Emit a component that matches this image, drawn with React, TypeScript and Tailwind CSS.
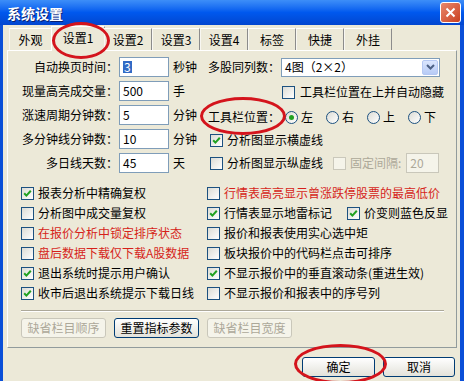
import React from "react";

function Check({ checked, disabled }: { checked?: boolean; disabled?: boolean }) {
  return (
    <span
      className={`w-[13px] h-[13px] shrink-0 border flex items-center justify-center ${
        disabled
          ? "border-[#cac8bb] bg-[#f5f4ea]"
          : "border-[#1c5180] bg-linear-to-br from-[#dcdcd5] to-white"
      }`}
    >
      {checked && (
        <svg width="9" height="9" viewBox="0 0 9 9">
          <path d="M1.2 4.2 L3.4 6.6 L7.8 1.8" stroke="#21a121" strokeWidth="2" fill="none" />
        </svg>
      )}
    </span>
  );
}

function Radio({ on }: { on?: boolean }) {
  return (
    <span className="w-[13px] h-[13px] shrink-0 rounded-full border border-[#1c5180] bg-linear-to-br from-[#dcdcd5] to-white flex items-center justify-center">
      {on && <span className="w-[5px] h-[5px] rounded-full bg-[#21a121]" />}
    </span>
  );
}

function Field({ children, w = "w-[50px]", disabled }: { children: React.ReactNode; w?: string; disabled?: boolean }) {
  return (
    <div
      className={`${w} h-[20px] border flex items-center px-[3px] shrink-0 ${
        disabled ? "border-[#c9c7ba] bg-[#f5f4ea] text-[#aca899]" : "border-[#7f9db9] bg-white"
      }`}
    >
      {children}
    </div>
  );
}

function CheckRow({ label, checked, red }: { label: string; checked?: boolean; red?: boolean }) {
  return (
    <div className="flex items-center h-[20px] gap-[4px]">
      <Check checked={checked} />
      <span className={red ? "text-[#d61f1a]" : ""}>{label}</span>
    </div>
  );
}

function XpButton({ label, disabled, w = "w-[85px]" }: { label: string; disabled?: boolean; w?: string }) {
  return (
    <button
      className={`${w} h-[20px] rounded-[3px] border flex items-center justify-center ${
        disabled
          ? "border-[#c9c7ba] bg-[#f5f4ea] text-[#aca899]"
          : "border-[#003c74] bg-linear-to-b from-white to-[#e3e2da] text-black"
      }`}
    >
      {label}
    </button>
  );
}

const tabs = ["外观", "设置1", "设置2", "设置3", "设置4", "标签", "快捷", "外挂"];

export default function App() {
  return (
    <div
      className="relative w-[464px] h-[381px] overflow-hidden flex flex-col bg-[#0a4fd8] text-[12px] leading-none text-black"
      style={{ fontFamily: '"Noto Sans CJK SC", "Noto Sans", sans-serif' }}
    >
      {/* title bar */}
      <div className="h-[25px] shrink-0 flex items-center justify-between pl-[7px] pr-[3px] bg-linear-to-b from-[#3d8ef8] via-[#0058ee] to-[#0246cf]">
        <span className="text-white font-bold text-[14px] [text-shadow:1px_1px_#0a1f6e]">系统设置</span>
        <div className="w-[21px] h-[21px] rounded-[3px] border border-white bg-linear-to-br from-[#e9876b] to-[#c93e1d] flex items-center justify-center">
          <svg width="11" height="11" viewBox="0 0 11 11">
            <path d="M1.5 1.5 L9.5 9.5 M9.5 1.5 L1.5 9.5" stroke="white" strokeWidth="2" />
          </svg>
        </div>
      </div>

      {/* body */}
      <div className="flex-1 ml-[3px] mr-[4px] bg-[#ece9d8] px-[4px] flex flex-col">
        {/* tabs */}
        <div className="h-[25px] flex items-end pl-[2px] relative z-10">
          {tabs.map((t, i) =>
            i === 1 ? (
              <div
                key={t}
                className="w-[54px] h-[25px] -mb-px -mx-[1px] bg-[#ece9d8] border-t border-l border-white border-r border-r-[#919b9c] flex items-center justify-center pb-[2px]"
              >
                {t}
              </div>
            ) : (
              <div
                key={t}
                className={`${i === 0 ? "w-[43px]" : "w-[48px]"} h-[22px] border-t border-l border-t-white border-l-[#f8f7f2] border-r border-r-[#8c8c8c] flex items-center justify-center bg-[#ece9d8]`}
              >
                {t}
              </div>
            )
          )}
        </div>

        {/* panel */}
        <div className="w-[450px] h-[298px] border border-t-white border-l-white border-r-[#919b9c] border-b-[#919b9c] pt-[6px] flex flex-col">
          <div className="flex flex-col gap-[4px]">
            <div className="flex items-center h-[20px]">
              <span className="w-[110px] text-right">自动换页时间：</span>
              <div className="ml-[1px]">
                <Field>
                  <span className="bg-[#316ac5] text-white px-px">3</span>
                </Field>
              </div>
              <span className="ml-[4px] w-[35px]">秒钟</span>
              <span className="w-[72px]">多股同列数：</span>
              <div className="ml-[1px] w-[159px] h-[19px] border border-[#7f9db9] bg-white flex items-center justify-between pl-[3px] pr-px">
                <span>4图（2×2）</span>
                <span className="w-[16px] h-[15px] rounded-[2px] border border-[#b5c8f3] bg-linear-to-b from-[#dbe6fd] to-[#b7cbf6] flex items-center justify-center">
                  <svg width="9" height="6" viewBox="0 0 9 6">
                    <path d="M1 1 L4.5 4.5 L8 1" stroke="#4d6185" strokeWidth="2" fill="none" />
                  </svg>
                </span>
              </div>
            </div>

            <div className="flex items-center h-[20px]">
              <span className="w-[110px] text-right">现量高亮成交量：</span>
              <div className="ml-[1px]">
                <Field>500</Field>
              </div>
              <span className="ml-[4px] w-[35px]">手</span>
              <div className="ml-[74px] flex items-center gap-[5px] mt-[2px]">
                <Check />
                <span>工具栏位置在上并自动隐藏</span>
              </div>
            </div>

            <div className="flex items-center h-[20px]">
              <span className="w-[110px] text-right">涨速周期分钟数：</span>
              <div className="ml-[1px]">
                <Field>5</Field>
              </div>
              <span className="ml-[4px] w-[35px]">分钟</span>
              <span className="w-[72px] mt-[4px]">工具栏位置：</span>
              <div className="ml-[5px] flex items-center mt-[4px]">
                {["左", "右", "上", "下"].map((r, i) => (
                  <div key={r} className="w-[41px] flex items-center gap-[3px]">
                    <Radio on={i === 0} />
                    <span>{r}</span>
                  </div>
                ))}
              </div>
            </div>

            <div className="flex items-center h-[20px]">
              <span className="w-[110px] text-right">多分钟线分钟数：</span>
              <div className="ml-[1px]">
                <Field>10</Field>
              </div>
              <span className="ml-[4px] w-[35px]">分钟</span>
              <div className="ml-[2px] flex items-center gap-[4px] mt-[2px]">
                <Check checked />
                <span>分析图显示横虚线</span>
              </div>
            </div>

            <div className="flex items-center h-[20px]">
              <span className="w-[110px] text-right">多日线天数：</span>
              <div className="ml-[1px]">
                <Field>45</Field>
              </div>
              <span className="ml-[4px] w-[35px]">天</span>
              <div className="ml-[2px] flex items-center gap-[4px]">
                <Check />
                <span>分析图显示纵虚线</span>
              </div>
              <div className="ml-[10px] flex items-center gap-[4px]">
                <Check disabled />
                <span className="text-[#aca899]">固定间隔:</span>
              </div>
              <div className="ml-[5px]">
                <Field w="w-[33px]" disabled>
                  20
                </Field>
              </div>
            </div>
          </div>

          {/* check list */}
          <div className="mt-[10px] pl-[13px] grid grid-cols-[186px_1fr]">
            <CheckRow label="报表分析中精确复权" checked />
            <CheckRow label="行情表高亮显示曾涨跌停股票的最高低价" red />
            <CheckRow label="分析图中成交量复权" />
            <div className="flex items-center h-[20px]">
              <Check checked />
              <span className="ml-[4px]">行情表显示地雷标记</span>
              <span className="ml-[15px]">
                <Check checked />
              </span>
              <span className="ml-[4px]">价变则蓝色反显</span>
            </div>
            <CheckRow label="在报价分析中锁定排序状态" red />
            <CheckRow label="报价和报表使用实心选中矩" />
            <CheckRow label="盘后数据下载仅下载A股数据" red />
            <CheckRow label="板块报价中的代码栏点击可排序" />
            <CheckRow label="退出系统时提示用户确认" checked />
            <CheckRow label="不显示报价中的垂直滚动条(重进生效)" checked />
            <CheckRow label="收市后退出系统提示下载日线" checked />
            <CheckRow label="不显示报价和报表中的序号列" />
          </div>

          <div className="ml-[13px] w-[423px] mt-[7px] border-t border-[#aca899] border-b border-b-white" />

          <div className="mt-[6px] pl-[13px] flex gap-[8px]">
            <XpButton label="缺省栏目顺序" disabled />
            <XpButton label="重置指标参数" />
            <XpButton label="缺省栏目宽度" disabled />
          </div>
        </div>

        {/* dialog buttons */}
        <div className="mt-[9px] flex justify-end gap-[8px] pr-[1px]">
          <XpButton label="确定" w="w-[73px]" />
          <XpButton label="取消" w="w-[72px]" />
        </div>
      </div>

      {/* red annotation rings */}
      <div className="absolute left-[52px] top-[22px] w-[58px] h-[37px] rounded-[50%] border-[3px] border-[#d4141c] z-20" />
      <div className="absolute left-[200px] top-[97px] w-[86px] h-[38px] rounded-[50%] border-[3px] border-[#d4141c] z-20" />
      <div className="absolute left-[294px] top-[344px] w-[93px] h-[40px] rounded-[50%] border-[3px] border-[#d4141c] z-20" />
    </div>
  );
}
